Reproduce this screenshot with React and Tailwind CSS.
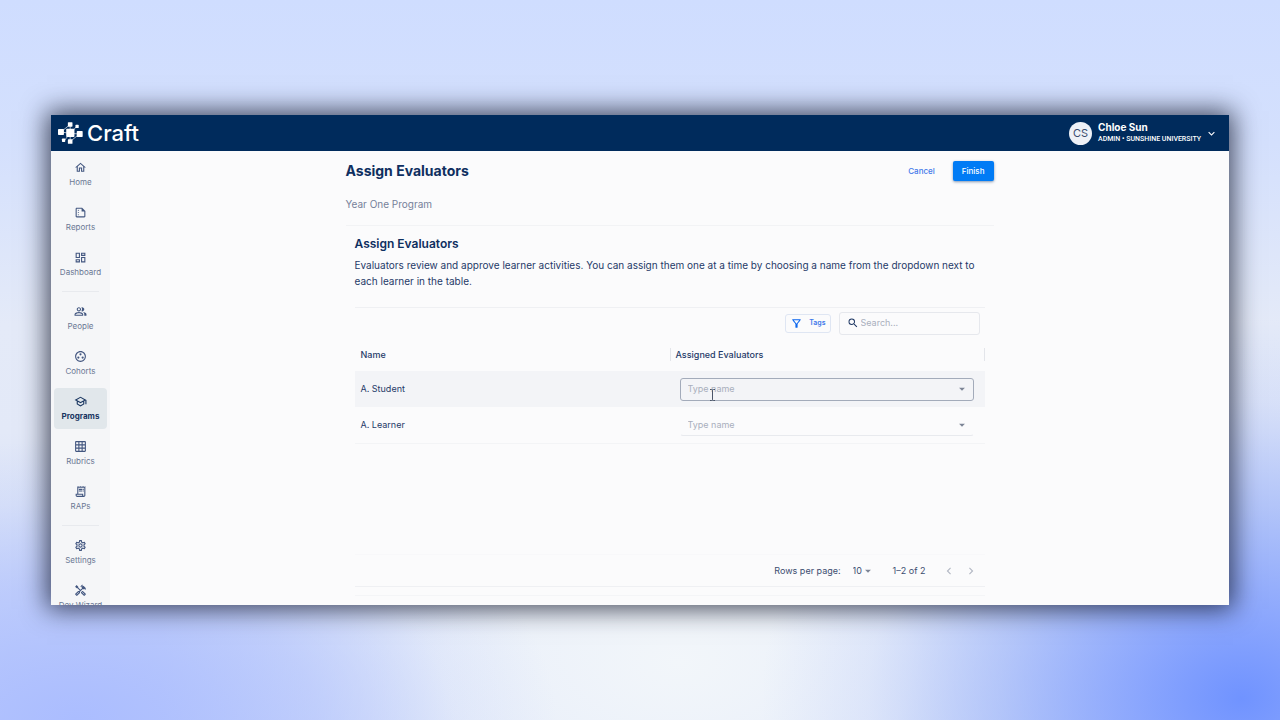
import {
  MdOutlineHome, MdOutlineSummarize, MdOutlineDashboard, MdOutlinePeopleAlt, MdOutlineGroupWork,
  MdOutlineSchool, MdGridOn, MdOutlineReceiptLong, MdOutlineSettings, MdOutlineHandyman,
  MdOutlineFilterAlt, MdSearch, MdArrowDropDown, MdKeyboardArrowDown, MdChevronLeft, MdChevronRight,
} from "react-icons/md";

const NAV = [
  [
    { label: "Home", icon: MdOutlineHome },
    { label: "Reports", icon: MdOutlineSummarize },
    { label: "Dashboard", icon: MdOutlineDashboard },
  ],
  [
    { label: "People", icon: MdOutlinePeopleAlt },
    { label: "Cohorts", icon: MdOutlineGroupWork },
    { label: "Programs", icon: MdOutlineSchool, active: true },
    { label: "Rubrics", icon: MdGridOn },
    { label: "RAPs", icon: MdOutlineReceiptLong },
  ],
  [
    { label: "Settings", icon: MdOutlineSettings },
    { label: "Dev Wizard", icon: MdOutlineHandyman },
  ],
];

const LEARNERS = [
  { id: 1, name: "A. Student", focused: true },
  { id: 2, name: "A. Learner" },
];

function Logo() {
  return (
    <a href="#" aria-label="Craft" className="flex items-center gap-1 text-white">
      <svg viewBox="0 0 76 66" className="h-[22px] w-[25px]" fill="currentColor">
        <path d="M9 30 37 7M37 7v50M20 55 37 34 58 12M9 30l28 4 28 2M37 59l28-23" stroke="currentColor" strokeWidth="2" fill="none" />
        <rect x="25" y="20" width="25" height="25" rx="2" />
        <rect x="30" y="0" width="14" height="14" rx="2" />
        <rect x="0" y="21" width="18" height="18" rx="2" />
        <rect x="57" y="27" width="18" height="18" rx="2" />
        <rect x="30" y="52" width="14" height="14" rx="2" />
        <rect x="53" y="8" width="10" height="10" rx="2" />
        <rect x="12" y="50" width="10" height="10" rx="2" />
      </svg>
      <span className="text-[22px] leading-6 font-medium">Craft</span>
    </a>
  );
}

function Header() {
  return (
    <header className="flex h-9 shrink-0 items-center justify-between bg-[#002b5c] pr-[11px] pl-[7px]">
      <Logo />
      <button className="flex items-center text-left text-white">
        <span className="flex size-[23px] items-center justify-center rounded-full bg-[#eef1f7] text-[11px] text-[#3a4c6e]">CS</span>
        <span className="ml-1.5 flex flex-col">
          <span className="text-[10px] leading-3 font-bold">Chloe Sun</span>
          <span className="font-['Roboto',sans-serif] text-[7px] leading-3 font-medium">ADMIN • SUNSHINE UNIVERSITY</span>
        </span>
        <MdKeyboardArrowDown size={13} className="ml-1" />
      </button>
    </header>
  );
}

function NavItem({ item }) {
  const Icon = item.icon;
  return (
    <a
      href="#"
      className={
        "flex h-[41px] shrink-0 flex-col items-center gap-[3px] rounded pt-[7px] " +
        (item.active ? "bg-[#e1e7eb] font-bold text-[#17345f]" : "text-[#6b7894]")
      }
    >
      <Icon size={13} className={item.active ? "text-[#17345f]" : "text-[#435780]"} />
      <span className="text-[8px] leading-[10px] whitespace-nowrap">{item.label}</span>
    </a>
  );
}

function Sidebar() {
  return (
    <nav className="flex w-[59px] shrink-0 flex-col gap-1 overflow-hidden bg-[#f5f6f8] px-[3px] pt-[3px]">
      {NAV.map((group, i) => (
        <div key={i} className="contents">
          {i > 0 && <hr className="mx-2 my-0.5 border-[#e8eaee]" />}
          {group.map((item) => <NavItem key={item.label} item={item} />)}
        </div>
      ))}
    </nav>
  );
}

function EvaluatorInput({ learner }) {
  return (
    <div
      className={
        "relative mr-[11px] ml-2.5 flex h-[23px] items-center rounded-[3px] border pr-1 pl-[7px] " +
        (learner.focused ? "border-[#a3abba]" : "border-transparent border-b-[#e8eaee]")
      }
    >
      <input
        type="text"
        aria-label={`Evaluator for ${learner.name}`}
        placeholder="Type name"
        className="min-w-0 flex-1 bg-transparent text-[9px] leading-4 outline-none placeholder:text-[#a9afbc]"
      />
      <button aria-label="Show evaluators" className="text-[#7c8596]"><MdArrowDropDown size={14} /></button>
      {learner.focused && (
        <svg viewBox="0 0 7 12" className="pointer-events-none absolute top-2.5 left-7 h-3 w-[7px]" fill="none" stroke="#4b5568">
          <path d="M1 .5h1.5q1 0 1 1 0-1 1-1H6M3.500 1.500v9M1 11.500h1.500q1 0 1-1 0 1 1 1H6" />
        </svg>
      )}
    </div>
  );
}

function Toolbar() {
  return (
    <div className="flex h-[30px] items-center justify-end gap-2 pr-[5px]">
      <button className="flex h-[19px] items-center gap-1.5 rounded-[3px] border border-[#dfe6f3] px-1 text-[7px] font-semibold text-[#3f78ea]">
        <MdOutlineFilterAlt size={13} className="text-[#0b66ee]" />
        Tags
      </button>
      <label className="flex h-[23px] w-[141px] items-center gap-0.5 rounded-[3px] border border-[#e6e8ed] px-[7px]">
        <MdSearch size={12} className="shrink-0 text-[#1f3864]" />
        <input type="search" aria-label="Search" placeholder="Search..." className="min-w-0 flex-1 bg-transparent text-[9px] leading-4 outline-none placeholder:text-[#a9afbc]" />
      </label>
    </div>
  );
}

function Pagination() {
  return (
    <div className="flex h-8 items-center justify-end border-t border-[#f8f8fa] pr-[7px] text-[9px] text-[#3b4d70]">
      <label htmlFor="rows" className="mr-3">Rows per page:</label>
      <div className="relative mr-5 flex items-center">
        <select id="rows" defaultValue="10" className="w-5 appearance-none bg-transparent outline-none">
          <option>10</option>
          <option>25</option>
        </select>
        <MdArrowDropDown size={14} className="pointer-events-none absolute left-2 text-[#7c8596]" />
      </div>
      <span className="mr-4">1–2 of 2</span>
      <button aria-label="Previous page" className="mr-2 text-[#b4b9c4]"><MdChevronLeft size={14} /></button>
      <button aria-label="Next page" className="text-[#b4b9c4]"><MdChevronRight size={14} /></button>
    </div>
  );
}

export default function App() {
  return (
    <div className="h-screen bg-[radial-gradient(ellipse_480px_380px_at_97%_97%,#7093ff_0%,#809efed9_22%,#96affa99_50%,#a5bafa33_78%,transparent_100%),radial-gradient(ellipse_480px_280px_at_6%_100%,#abbdff_0%,#b0c1fe99_50%,#b8c8fc33_78%,transparent_100%),radial-gradient(ellipse_520px_340px_at_53%_92%,#f2f6fa_0%,#f2f6facc_45%,transparent_100%),linear-gradient(#cfddff_0%,#d4e0fd_20%,#e4eaf8_45%,#e3e9f8_60%,#c3d1f8_100%)] px-[51px] py-[115px] font-['Inter',sans-serif] text-[#1f3a68]">
      <div className="flex h-full flex-col overflow-hidden bg-[#fbfbfc] shadow-[0_0_24px_4px_rgba(15,20,40,0.75)]">
        <Header />
        <div className="flex min-h-0 flex-1">
          <Sidebar />
          <main className="min-w-0 flex-1 overflow-hidden">
            <div className="mx-auto flex h-full max-w-[648px] flex-col pt-[10px]">
              <div className="flex items-center justify-between">
                <h1 className="text-[14px] leading-5 font-bold text-[#0f2f60]">Assign Evaluators</h1>
                <div className="flex items-center gap-[18px] text-[8px] font-medium">
                  <button className="text-[#3f78ea]">Cancel</button>
                  <button className="h-5 rounded-[2px] bg-[#007bf5] px-[9px] text-white shadow-sm shadow-slate-400">Finish</button>
                </div>
              </div>
              <p className="mt-[15px] text-[10px] leading-4 text-[#76819a]">Year One Program</p>

              <section className="mt-[13px] flex flex-1 flex-col border-t border-[#f2f3f5] px-[9px] pt-2.5">
                <h2 className="text-[12px] leading-4 font-semibold text-[#0f2f60]">Assign Evaluators</h2>
                <p className="mt-[5px] text-[10px] leading-4">
                  Evaluators review and approve learner activities. You can assign them one at a time by choosing a name from the dropdown next to each learner in the table.
                </p>

                <div className="mt-[18px] flex h-[280px] flex-col border-y border-[#eff0f3]">
                  <Toolbar />
                  <table className="w-full table-fixed text-left text-[9px]">
                    <thead>
                      <tr className="h-[33px]">
                        <th className="px-1.5 font-medium">Name</th>
                        <th className="font-medium">
                          <div className="border-x border-[#e3e5ea] px-[5px]">Assigned Evaluators</div>
                        </th>
                      </tr>
                    </thead>
                    <tbody>
                      {LEARNERS.map((l) => (
                        <tr key={l.id} className={l.focused ? "h-9 bg-[#f3f4f7]" : "h-9 border-b border-[#f3f4f6]"}>
                          <td className="px-1.5">{l.name}</td>
                          <td><EvaluatorInput learner={l} /></td>
                        </tr>
                      ))}
                    </tbody>
                  </table>
                  <div className="mt-auto"><Pagination /></div>
                </div>
                <hr className="mt-2 border-[#f4f5f7]" />
              </section>
            </div>
          </main>
        </div>
      </div>
    </div>
  );
}
